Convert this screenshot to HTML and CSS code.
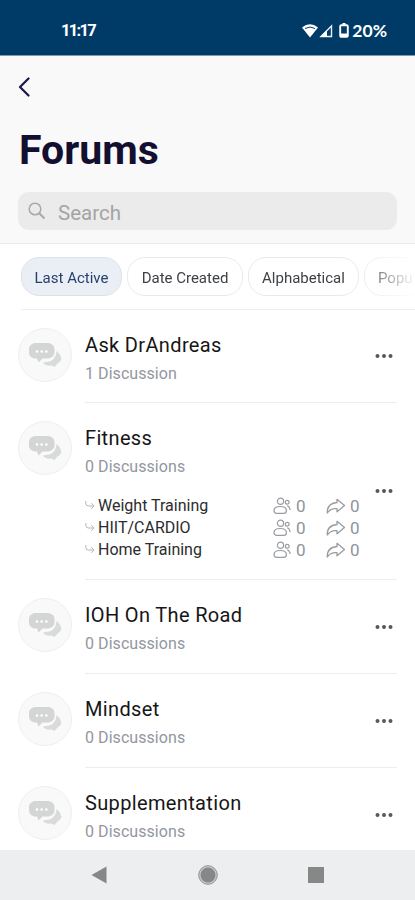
FILE: index.html
```html
<!DOCTYPE html>
<html lang="en">
<head>
<meta charset="utf-8">
<title>Forums</title>
<link rel="stylesheet" href="styles.css">
</head>
<body>
<svg class="sprite" aria-hidden="true">
  <symbol id="chat" viewBox="0 0 34 26">
    <path d="M28.500 9c3.500 2.500 4 5 5 8-.8 2.500-2.500 3.500-4 4.500L26.500 25l-3-1.500c-4 .5-7-.5-8.700-2.700 2-.8 4.500-.5 7.200-1.500 4-1.500 6-5 6.500-10.300z" fill="#d9dbdb"/>
    <path d="M8 1h11c4.500 0 7.500 2.500 7.500 6v3c0 4-3 6.500-7.500 6.500h-4.500l-4 4-1.500-4H8c-4.500 0-7-2.500-7-6.500V7c0-3.500 3-6 7-6z" fill="#d4d6d6"/>
    <g fill="#fff"><circle cx="9" cy="9.500" r="1.300"/><circle cx="13.700" cy="9.500" r="1.300"/><circle cx="18.400" cy="9.500" r="1.300"/></g>
  </symbol>
  <symbol id="dots" viewBox="0 0 18 6">
    <g fill="#56585b"><circle cx="2.500" cy="3" r="2"/><circle cx="9" cy="3" r="2"/><circle cx="15.500" cy="3" r="2"/></g>
  </symbol>
  <symbol id="sub" viewBox="0 0 10 10">
    <path d="M.8 0v2.300Q.8 5 3.500 5H9M6.300 2.200 9 5 6.300 7.800" fill="none" stroke="#b4b6b9" stroke-width="1"/>
  </symbol>
  <symbol id="people" viewBox="0 0 19 18">
    <g fill="none" stroke="#999ca0" stroke-width="1.200"><circle cx="7.500" cy="4.300" r="3.100"/><path d="M1 13.500c0-2.800 2.500-4 6.200-4s6.200 1.200 6.200 4c0 2-1 2.900-2.600 2.900H3.600C2 16.400 1 15.500 1 13.500z"/><circle cx="14.200" cy="5.300" r="1.900"/><path d="M14.200 8.800c1.600.5 2.500 1.700 3 4.200"/></g>
  </symbol>
  <symbol id="share" viewBox="0 0 20 17">
    <path d="M11 1.300 18.500 7.500 11 13.800v-3.100C6.500 10.200 3.700 11.500 1.300 15c-.3-6 3.200-9.900 9.700-10.500z" fill="none" stroke="#999ca0" stroke-width="1.300" stroke-linejoin="round"/>
  </symbol>
</svg>
<div class="screen">
  <div class="status">
    <span class="time">11:17</span>
    <div class="indicators">
      <svg class="wifi" viewBox="0 0 16 14"><path d="M0 3.500Q8-3 16 3.500L8 13.500z" fill="#fff"/><path d="M3 4.500q5-3 10 0" fill="none" stroke="#003b68" stroke-width="1"/></svg>
      <svg class="signal" viewBox="0 0 14 14"><path d="M12.500 2v10.500H2z" fill="none" stroke="#e9edf5" stroke-width="1.400"/><path d="M8 6v7H1z" fill="#fff"/></svg>
      <svg class="battery" viewBox="0 0 10 15"><path d="M3.500 0h3v2h-3z" fill="#fff"/><rect x="1.200" y="2.200" width="7.600" height="11.600" rx="1" fill="none" stroke="#fff" stroke-width="1.900"/><path d="M2 10.500h6v3H2z" fill="#fff"/></svg>
      <span class="percent">20%</span>
    </div>
  </div>
  <header class="header">
    <svg class="back" viewBox="0 0 12 20"><path d="M10.500 1.500 2 10l8.500 8.500" fill="none" stroke="#1c1748" stroke-width="2.200" stroke-linecap="round" stroke-linejoin="round"/></svg>
    <h1 class="title">Forums</h1>
    <div class="search">
      <svg class="lens" viewBox="0 0 18 18"><circle cx="7" cy="7" r="5.800" fill="none" stroke="#a9a9a9" stroke-width="1.500"/><path d="m11.200 11.200 5.300 5.300" stroke="#a9a9a9" stroke-width="2"/></svg>
      <span class="placeholder">Search</span>
    </div>
  </header>
  <nav class="filters">
    <div class="chips">
      <span class="chip chip-active chip-1">Last Active</span>
      <span class="chip chip-2">Date Created</span>
      <span class="chip chip-3">Alphabetical</span>
      <span class="chip chip-4">Popu</span>
    </div>
  </nav>
  <main class="list">
    <article class="forum forum-first">
      <div class="avatar"><svg class="chat"><use href="#chat"/></svg></div>
      <div class="body">
        <div class="info"><h2 class="name">Ask DrAndreas</h2><p class="count">1 Discussion</p></div>
        <svg class="dots"><use href="#dots"/></svg>
      </div>
    </article>
    <article class="forum forum-tall">
      <div class="avatar"><svg class="chat"><use href="#chat"/></svg></div>
      <div class="body">
        <div class="info">
          <h2 class="name">Fitness</h2><p class="count">0 Discussions</p>
          <div class="subs">
            <div class="subrow"><svg class="sub"><use href="#sub"/></svg><span class="label">Weight Training</span><svg class="people"><use href="#people"/></svg><span class="num">0</span><svg class="share"><use href="#share"/></svg><span class="num">0</span></div>
            <div class="subrow"><svg class="sub"><use href="#sub"/></svg><span class="label">HIIT/CARDIO</span><svg class="people"><use href="#people"/></svg><span class="num">0</span><svg class="share"><use href="#share"/></svg><span class="num">0</span></div>
            <div class="subrow"><svg class="sub"><use href="#sub"/></svg><span class="label">Home Training</span><svg class="people"><use href="#people"/></svg><span class="num">0</span><svg class="share"><use href="#share"/></svg><span class="num">0</span></div>
          </div>
        </div>
        <svg class="dots"><use href="#dots"/></svg>
      </div>
    </article>
    <article class="forum">
      <div class="avatar"><svg class="chat"><use href="#chat"/></svg></div>
      <div class="body">
        <div class="info"><h2 class="name">IOH On The Road</h2><p class="count">0 Discussions</p></div>
        <svg class="dots"><use href="#dots"/></svg>
      </div>
    </article>
    <article class="forum">
      <div class="avatar"><svg class="chat"><use href="#chat"/></svg></div>
      <div class="body">
        <div class="info"><h2 class="name">Mindset</h2><p class="count">0 Discussions</p></div>
        <svg class="dots"><use href="#dots"/></svg>
      </div>
    </article>
    <article class="forum">
      <div class="avatar"><svg class="chat"><use href="#chat"/></svg></div>
      <div class="body">
        <div class="info"><h2 class="name">Supplementation</h2><p class="count">0 Discussions</p></div>
        <svg class="dots"><use href="#dots"/></svg>
      </div>
    </article>
  </main>
  <footer class="navbar">
    <svg class="key" viewBox="0 0 20 20"><path d="M16.500 1.500v17L1.500 10z" fill="#868888"/></svg>
    <svg class="key" viewBox="0 0 20 20"><circle cx="10" cy="10" r="9.300" fill="#c5c7c7" stroke="#929494" stroke-width="1"/><circle cx="10" cy="10" r="7.500" fill="#868888"/></svg>
    <svg class="key" viewBox="0 0 20 20"><path d="M2 2h16v16H2z" fill="#868888"/></svg>
  </footer>
</div>
</body>
</html>
```
FILE: styles.css
```css
* { box-sizing: border-box; }
body { margin: 0; font-family: Roboto, "Liberation Sans", sans-serif; background: #fff; }
h1, h2, p { margin: 0; font-weight: 400; }
svg { display: block; flex: none; }
.sprite { display: none; }
.screen { width: 415px; height: 900px; display: flex; flex-direction: column; overflow: hidden; }

.status { height: 56px; flex: none; background: #003b68; border-bottom: 1px solid #8296b3; display: flex; justify-content: space-between; align-items: center; padding: 6px 28px 0 61px; color: #fff; }
.time { font-size: 16.500px; font-weight: 700; letter-spacing: -1.700px; }
.indicators { display: flex; align-items: center; }
.wifi { width: 16px; height: 14px; }
.signal { width: 14px; height: 14px; margin-left: 1px; }
.battery { width: 10px; height: 15px; margin-left: 6px; }
.percent { font-family: Lato, sans-serif; font-weight: 700; font-size: 17.500px; margin-left: 3px; }

.header { height: 188px; flex: none; background: #f9f9f9; border-bottom: 1px solid #e9e9e9; padding: 21px 18px 0; }
.back { width: 12px; height: 20px; }
.title { font-size: 41px; line-height: 48px; font-weight: 700; color: #130f30; margin: 29px 0 0 1px; }
.search { height: 38px; margin-top: 18px; border-radius: 11px; background: #ebebeb; display: flex; align-items: center; padding-left: 10px; }
.lens { width: 18px; height: 18px; }
.placeholder { font-size: 20.500px; line-height: 36px; color: #a4a4a4; margin-left: 12px; padding-top: 3px; }

.filters { height: 66px; flex: none; margin-left: 21px; border-bottom: 1px solid #eee; padding-top: 13px; }
.chips { display: flex; gap: 5px; overflow: hidden; -webkit-mask-image: linear-gradient(to right, #000 335px, transparent 396px); mask-image: linear-gradient(to right, #000 335px, transparent 396px); }
.chip { height: 39px; flex: none; border: 1.500px solid #e8e9eb; border-radius: 18px; display: flex; align-items: center; justify-content: center; font-size: 15px; padding-top: 2px; color: #3e4145; white-space: nowrap; }
.chip-active { background: #e9eff5; border-color: #dbe2e8; color: #29406e; }
.chip-1 { width: 101px; }
.chip-2 { width: 116px; }
.chip-3 { width: 111px; }
.chip-4 { width: 82px; justify-content: flex-start; padding-left: 13px; }

.list { flex: 1; min-height: 0; overflow: hidden; padding: 0 18px; }
.forum { height: 94px; display: flex; }
.forum-first { height: 93px; }
.forum-tall { height: 177px; }
.avatar { width: 54px; height: 54px; flex: none; margin-top: 18px; border: 1px solid #eeefef; border-radius: 50%; background: #f9f9f9; display: flex; align-items: center; justify-content: center; }
.chat { width: 34px; height: 26px; }
.body { flex: 1; margin-left: 13px; border-bottom: 1px solid #ededed; display: flex; align-items: center; justify-content: space-between; }
.dots { width: 18px; height: 6px; margin-right: 4px; }
.info { align-self: flex-start; padding-top: 22px; }
.name { font-size: 20px; line-height: 26px; color: #161616; letter-spacing: 0.350px; }
.count { font-size: 16px; line-height: 20px; color: #92979f; margin-top: 6px; letter-spacing: 0.060px; }
.subs { margin-top: 18px; }
.subrow { height: 22px; display: flex; align-items: center; color: #2c2c2e; }
.sub { width: 10px; height: 10px; margin-right: 3px; }
.label { width: 175px; font-size: 16px; line-height: 22px; }
.people { width: 19px; height: 18px; }
.num { font-size: 17px; line-height: 22px; width: 10px; color: #90949a; margin-left: 4px; }
.share { width: 20px; height: 17px; margin-left: 20px; }

.navbar { height: 50px; flex: none; background: #eceeef; display: flex; justify-content: center; align-items: center; gap: 88px; }
.key { width: 20px; height: 20px; }
```
